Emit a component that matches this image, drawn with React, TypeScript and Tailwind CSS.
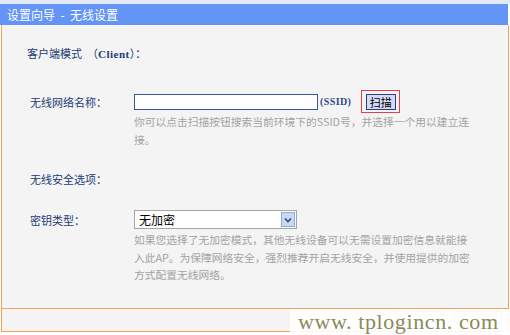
import React from "react";

const cjk = "font-['Noto_Sans_CJK_SC','Noto_Sans',sans-serif]";

const Label = ({ children }: { children: React.ReactNode }) => (
	<div className="w-[104px] shrink-0 text-[11px] leading-[18px] text-[#1d3b74]">{children}</div>
);

const Help = ({ lines, className = "" }: { lines: string[]; className?: string }) => (
	<div className={`pl-[104px] text-[10.75px] leading-[17.5px] text-[#a3a3a3] ${className}`}>
		{lines.map((l, i) => (
			<div key={i} className="whitespace-nowrap">{l}</div>
		))}
	</div>
);

const App = () => {
	return (
		<div className={`relative w-[510px] h-[335px] bg-white overflow-hidden ${cjk}`}>
			{/* top strip */}
			<div className="h-[4px] bg-[#e3eaf6]" />

			{/* header */}
			<div className="w-[508px] h-[21px] bg-[#6394f6] pl-[7px] text-[12px] leading-[21px] text-white whitespace-pre">
				设置向导  -  无线设置
			</div>

			<div className="ml-[1px] w-[508px] border-x border-[#f2a453]">
				{/* body */}
				<div className="h-[283px] bg-[#f4f4f4] pl-[28px]">
					<div className="pt-[19px] h-[37px] text-[11px] leading-[18px] text-[#1d3b74] -ml-[3px] whitespace-pre">
						客户端模式  （<span className="font-['Liberation_Serif',serif] font-bold text-[11px] tracking-[0.5px]">Client</span>）：
					</div>

					{/* SSID row */}
					<div className="mt-[28px] h-[23px] flex items-center">
						<Label>无线网络名称：</Label>
						<div className="w-[184px] h-[16px] bg-white border border-[#3a559a]" />
						<span className="ml-[2px] font-['Liberation_Serif',serif] font-semibold text-[10px] tracking-[0.4px] text-[#2a4a8a]">(SSID)</span>
						<div className="ml-[10px] w-[39px] h-[23px] border border-[#e04050] flex items-center justify-center">
							<button className="w-[30px] h-[16px] bg-[#d5dbf6] border border-[#2c3d86] text-[11px] leading-[14px] text-black">
								扫描
							</button>
						</div>
					</div>
					<Help lines={["你可以点击扫描按钮搜索当前环境下的SSID号，并选择一个用以建立连", "接。"]} />

					<div className="mt-[22px]">
						<Label>无线安全选项：</Label>
					</div>

					{/* key type row */}
					<div className="mt-[22px] h-[19px] flex items-center">
						<Label>密钥类型：</Label>
						<div className="w-[163px] h-[19px] bg-white border border-[#a6a6a6] flex items-center justify-between">
							<span className="pl-[4px] text-[12px] leading-[17px] text-black">无加密</span>
							<span className="mr-[1px] w-[14px] h-[15px] bg-[#c9d9f1] border border-[#91acd9] flex items-center justify-center">
								<svg width="8" height="6" viewBox="0 0 8 6">
									<path d="M1 1.5 L4 4.5 L7 1.5" fill="none" stroke="#2b4a86" strokeWidth="1.6" />
								</svg>
							</span>
						</div>
					</div>
					<Help
						className="mt-[2px]"
						lines={[
							"如果您选择了无加密模式，其他无线设备可以无需设置加密信息就能接",
							"入此AP。为保障网络安全，强烈推荐开启无线安全，并使用提供的加密",
							"方式配置无线网络。",
						]}
					/>
				</div>

				{/* footer */}
				<div className="h-[24px] bg-[#f4f4f4] border-y border-[#f2a453] flex items-start justify-end gap-[10px] pr-[6px] pt-[2px]">
					<div className="w-[48px] h-[12px] border border-[#b9c4d8] bg-[#eef1f7]" />
					<div className="w-[48px] h-[12px] border border-[#b9c4d8] bg-[#eef1f7]" />
				</div>
			</div>

			{/* watermark */}
			<div className="absolute left-[290px] top-[309px] w-[220px] h-[26px] bg-white/90 flex items-center pl-[8px]">
				<span className="font-['Liberation_Serif',serif] text-[22px] leading-[22px] tracking-[0.6px] text-[#8a8a5a]">
					www. tplogincn. com
				</span>
			</div>
		</div>
	);
};

export default App;
